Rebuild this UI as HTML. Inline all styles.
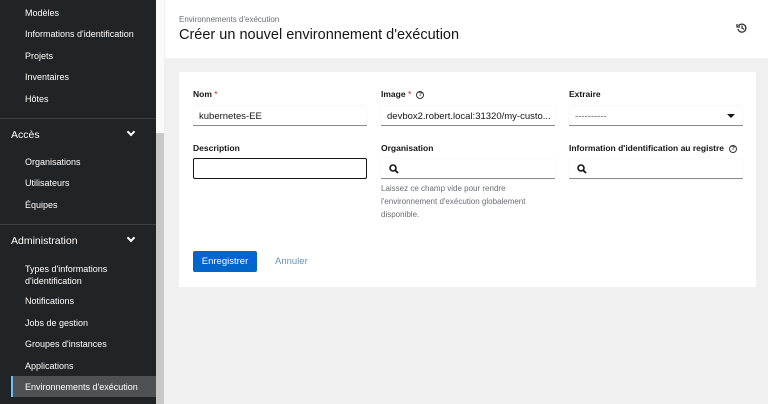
<!DOCTYPE html>
<html><head><meta charset="utf-8"><style>
*{box-sizing:border-box;margin:0;padding:0}
body{width:768px;height:404px;overflow:hidden;background:#f0f0f0;font-family:"Liberation Sans",sans-serif;position:relative}
.sb{position:absolute;left:0;top:0;width:156px;height:404px;background:#212427;color:#fff;font-size:9px}
.it{position:absolute;left:25px}
.sec{position:absolute;left:11px;font-size:10.5px}
.chev{position:absolute;left:128px;width:6px;height:6px;border-right:2px solid #fff;border-bottom:2px solid #fff;transform:rotate(45deg)}
.sep{position:absolute;left:0;width:156px;height:1px;background:#3c3f42}
.scroll{position:absolute;left:156px;top:0;width:8px;height:404px;background:#c8c8c8}
.scroll div{height:133px;background:#fafafa}
.hdr{position:absolute;left:165px;top:0;width:603px;height:58px;background:#fff}
.card{position:absolute;left:179px;top:72px;width:577px;height:215px;background:#fff}
.lbl{position:absolute;font-size:8.5px;font-weight:bold;color:#151515}
.inp{position:absolute;height:20px;border-bottom:1px solid #8a8d90;font-size:9.5px;color:#151515;padding:5px 0 0 6px;box-shadow:0 0 2px #eee}
.help{position:absolute;font-size:8px;color:#6a6e73;line-height:13px}
.q{display:inline-block;width:8px;height:8px;border:1px solid #333;border-radius:50%;font-size:6px;text-align:center;line-height:7px;margin-left:5px;vertical-align:middle}
</style></head><body>
<div class="sb">
<div class="it" style="top:8px">Modèles</div>
<div class="it" style="top:29px">Informations d'identification</div>
<div class="it" style="top:51px">Projets</div>
<div class="it" style="top:72px">Inventaires</div>
<div class="it" style="top:94px">Hôtes</div>
<div class="sep" style="top:118px"></div>
<div class="sec" style="top:129px">Accès</div><div class="chev" style="top:129px"></div>
<div class="it" style="top:157px">Organisations</div>
<div class="it" style="top:178px">Utilisateurs</div>
<div class="it" style="top:200px">Équipes</div>
<div class="sep" style="top:224px"></div>
<div class="sec" style="top:235px">Administration</div><div class="chev" style="top:235px"></div>
<div class="it" style="top:263px;line-height:12px">Types d'informations<br>d'identification</div>
<div class="it" style="top:296px">Notifications</div>
<div class="it" style="top:318px">Jobs de gestion</div>
<div class="it" style="top:339px">Groupes d'instances</div>
<div class="it" style="top:361px">Applications</div>
<div style="position:absolute;left:11px;top:376px;width:145px;height:21px;background:#4f5255;border-left:2px solid #73bcf7"></div>
<div class="it" style="top:382px">Environnements d'exécution</div>
</div>
<div class="scroll"><div></div></div>
<div class="hdr">
<div style="position:absolute;left:14px;top:15px;font-size:8px;color:#6a6e73">Environnements d'exécution</div>
<div style="position:absolute;left:14px;top:27px;font-size:14.5px;color:#151515">Créer un nouvel environnement d'exécution</div>
<svg style="position:absolute;left:571px;top:22px" width="12" height="12" viewBox="0 0 12 12" fill="none" stroke="#333" stroke-width="1.3"><path d="M2.5 4A4 4 0 1 1 2 7"/><path d="M1 2v3h3" /><path d="M6 3.5V6l2 1.2"/></svg>
</div>
<div class="card">
<div class="lbl" style="left:14px;top:17px">Nom <span style="color:#c9190b;font-weight:normal">*</span></div>
<div class="inp" style="left:14px;top:34px;width:174px">kubernetes-EE</div>
<div class="lbl" style="left:202px;top:17px">Image <span style="color:#c9190b;font-weight:normal">*</span><span class="q">?</span></div>
<div class="inp" style="left:202px;top:34px;width:174px">devbox2.robert.local:31320/my-custo...</div>
<div class="lbl" style="left:390px;top:17px">Extraire</div>
<div class="inp" style="left:390px;top:34px;width:174px;color:#555">----------<span style="position:absolute;right:8px;top:8px;border:4px solid transparent;border-top-color:#151515;border-bottom:0"></span></div>
<div class="lbl" style="left:14px;top:71px">Description</div>
<div style="position:absolute;left:14px;top:86px;width:174px;height:21px;border:1.5px solid #151515;border-radius:2px"></div>
<div class="lbl" style="left:202px;top:71px">Organisation</div>
<div class="inp" style="left:202px;top:87px;width:174px;font-weight:bold">
<svg width="10" height="10" viewBox="0 0 10 10" style="margin-left:2px"><circle cx="4" cy="4" r="3" fill="none" stroke="#151515" stroke-width="1.6"/><path d="M6.2 6.2L9 9" stroke="#151515" stroke-width="1.8"/></svg></div>
<div class="help" style="left:202px;top:110px">Laissez ce champ vide pour rendre<br>l'environnement d'exécution globalement<br>disponible.</div>
<div class="lbl" style="left:390px;top:71px">Information d'identification au registre<span class="q">?</span></div>
<div class="inp" style="left:390px;top:87px;width:174px">
<svg width="10" height="10" viewBox="0 0 10 10" style="margin-left:2px"><circle cx="4" cy="4" r="3" fill="none" stroke="#151515" stroke-width="1.6"/><path d="M6.2 6.2L9 9" stroke="#151515" stroke-width="1.8"/></svg></div>
<div style="position:absolute;left:14px;top:179px;width:64px;height:21px;background:#0066cc;border-radius:2px;color:#fff;font-size:9.5px;text-align:center;line-height:21px">Enregistrer</div>
<div style="position:absolute;left:96px;top:179px;font-size:9.5px;color:#6a8fbf;line-height:21px">Annuler</div>
</div>
</body></html>
